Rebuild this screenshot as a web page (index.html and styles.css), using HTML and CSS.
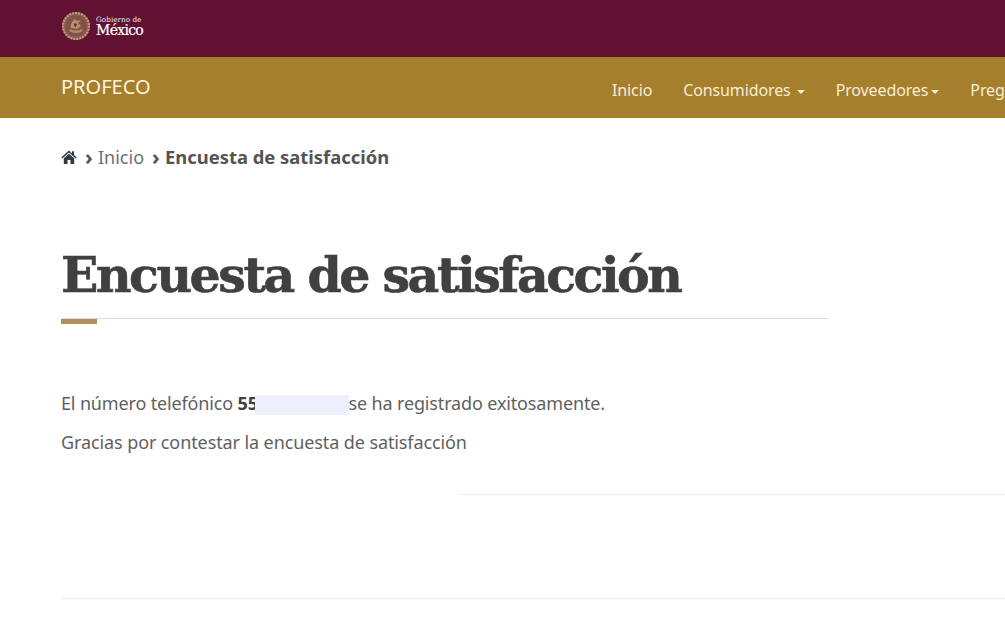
FILE: index.html
```html
<!DOCTYPE html>
<html lang="es">
<head>
<meta charset="utf-8">
<title>Encuesta de satisfacción</title>
<link rel="stylesheet" href="styles.css">
</head>
<body>
<header class="topbar">
  <div class="logo">
    <svg class="emblem" viewBox="0 0 30 30" width="30" height="30" aria-hidden="true">
      <circle cx="15" cy="15" r="14" fill="#8a5c4c"/>
      <circle cx="15" cy="15" r="13" fill="none" stroke="#c09a7c" stroke-width="2" stroke-dasharray="2 1"/>
      <circle cx="15" cy="15" r="10.500" fill="#84504a"/>
      <path d="M8 19c2 4 12 4 14 0l-2-1c-2 2-8 2-10 0z" fill="#b08a68"/>
      <path d="M10 17c-1-3 1-7 4-9l2 2 4-1-3 3 3 3-4 3z" fill="#b5916f"/>
      <path d="M13 12l3 1-1 3-2-1z" fill="#6b3538"/>
    </svg>
    <div class="logo-text">
      <span class="logo-small">Gobierno de</span>
      <span class="logo-big">México</span>
    </div>
  </div>
</header>
<nav class="navbar">
  <a class="brand" href="#">PROFECO</a>
  <ul class="menu">
    <li>Inicio</li>
    <li>Consumidores <span class="caret"></span></li>
    <li>Proveedores<span class="caret tight"></span></li>
    <li>Preguntas frecuentes</li>
  </ul>
</nav>
<main class="content">
  <div class="breadcrumb">
    <svg class="home" viewBox="0 0 16 14" width="16" height="14" aria-hidden="true">
      <path d="M8 0.500 0.300 7.300l1 1.100L8 2.600l6.700 5.800 1-1.100-2.700-2.400V1.300h-2v2.200z" fill="#2f3b3f"/>
      <path d="M2.800 8.200 8 3.800l5.200 4.400V14H9.500v-4h-3v4H2.800z" fill="#2f3b3f"/>
    </svg>
    <span class="sep">›</span>
    <span class="crumb">Inicio</span>
    <span class="sep">›</span>
    <strong class="current">Encuesta de satisfacción</strong>
  </div>
  <h1 class="title">Encuesta de satisfacción</h1>
  <div class="rule"><span class="rule-accent"></span></div>
  <p class="line first">El número telefónico <strong>55</strong><span class="redact"></span>se ha registrado exitosamente.</p>
  <p class="line">Gracias por contestar la encuesta de satisfacción</p>
  <div class="divider-short"></div>
  <div class="divider-long"></div>
</main>
</body>
</html>
```
FILE: styles.css
```css
* { box-sizing: border-box; }
html, body { margin: 0; height: 620px; overflow: hidden; background: #fff; }
body { font-family: "Noto Sans", "Open Sans", sans-serif; color: #545454; }

.topbar { height: 57px; background: #611232; padding: 11px 0 0 61px; }
.logo { display: flex; align-items: flex-start; gap: 5px; }
.emblem { display: block; }
.logo-text { display: flex; flex-direction: column; color: #fff; font-family: "DejaVu Serif", serif; padding-top: 5px; }
.logo-small { font-size: 7.300px; line-height: 8px; color: #f0e6ea; }
.logo-big { font-size: 14px; line-height: 13px; letter-spacing: -0.700px; -webkit-text-stroke: 0.200px #fff; }

.navbar { height: 61px; background: #a57f2c; padding-left: 61px; display: flex; overflow: hidden; white-space: nowrap; position: relative; }
.brand { color: #fdf3dc; font-size: 20px; line-height: 60px; text-decoration: none; }
.menu { list-style: none; margin: 0; padding: 0; position: absolute; left: 612px; top: 0; display: flex; gap: 31px; color: #f8edd6; font-size: 16px; line-height: 66px; letter-spacing: -0.120px; }
.caret { display: inline-block; border-top: 4px solid #f8edd6; border-left: 4px solid transparent; border-right: 4px solid transparent; vertical-align: middle; margin-left: 2px; }
.caret.tight { margin-left: 3px; }

.content { padding: 0 0 0 61px; }
.breadcrumb { display: flex; align-items: center; height: 22px; margin-top: 28px; font-size: 18px; line-height: 22px; }
.home { margin-right: 8px; }
.sep { font-weight: 700; color: #545454; margin-right: 5px; width: 8px; font-size: 21px; line-height: 20px; }
.crumb { color: #6f6f6f; margin-right: 8px; }
.current { color: #545454; font-size: 18.400px; }

.title { margin: 75px 0 0; font-family: "DejaVu Serif", serif; font-weight: 700; font-size: 49px; line-height: 64px; color: #404040; letter-spacing: -2.470px; -webkit-text-stroke: 0.600px #404040; }
.rule { position: relative; width: 767px; height: 1px; background: #dcdcdc; margin-top: 11px; }
.rule-accent { position: absolute; left: 0; top: 1px; width: 36px; height: 5px; background: #b38e5d; }

.line { margin: 0; font-size: 18px; line-height: 26px; color: #5f5f5f; }
.line.first { margin-top: 71px; letter-spacing: -0.150px; }
.line + .line { margin-top: 13px; letter-spacing: -0.100px; }
.line strong { color: #404040; display: inline-block; width: 17px; overflow: hidden; vertical-align: bottom; }
.redact { display: inline-block; width: 94px; height: 20px; background: #eeeffc; vertical-align: -5px; }

.divider-short { height: 1px; background: #ececec; margin: 39px 0 0 398px; }
.divider-long { height: 1px; background: #ececec; margin-top: 103px; }
```
